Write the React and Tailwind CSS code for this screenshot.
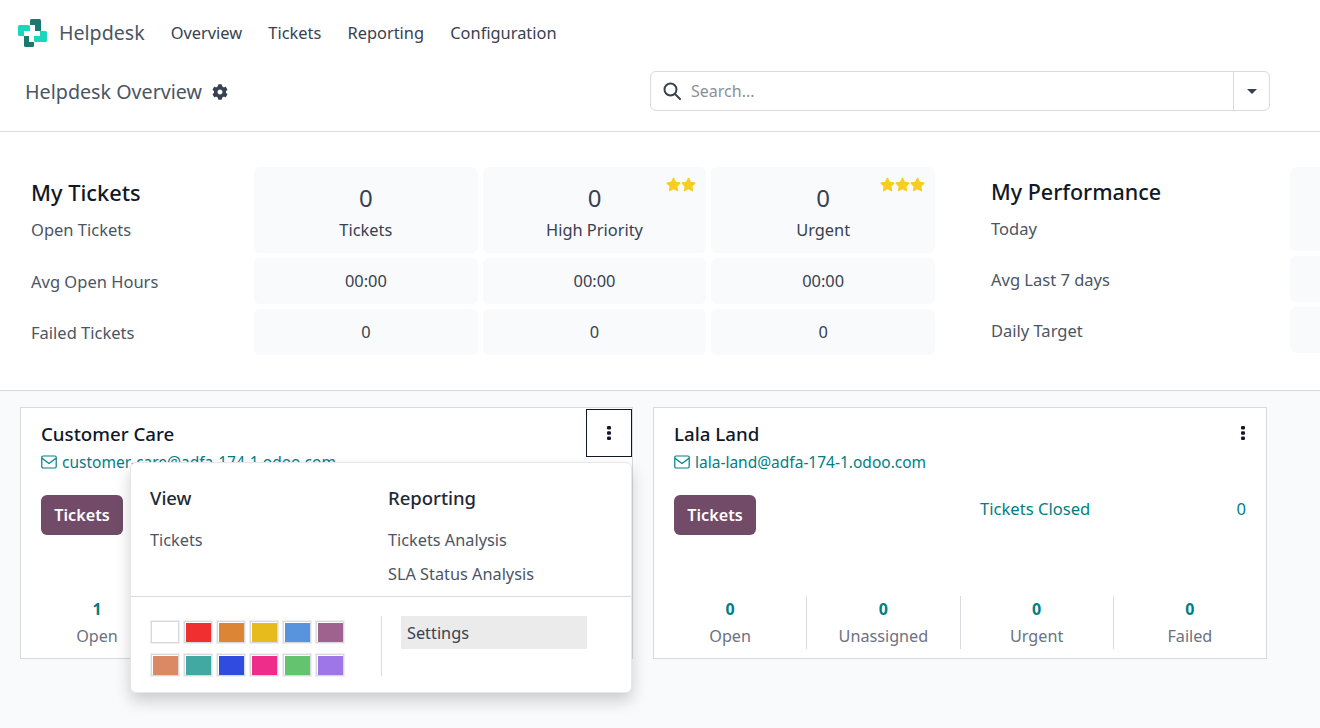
import { FaCog, FaStar } from "react-icons/fa";

const swatches = [
  "bg-white",
  "bg-[#f03030]",
  "bg-[#dc8534]",
  "bg-[#e8bb1d]",
  "bg-[#5794dd]",
  "bg-[#9f628f]",
  "bg-[#db8865]",
  "bg-[#41a9a2]",
  "bg-[#304be0]",
  "bg-[#ee2d8a]",
  "bg-[#63c36e]",
  "bg-[#9f76e8]",
];

function Logo() {
  return (
    <svg viewBox="0 0 29 28" className="h-[28px] w-[29px]">
      <rect x="6" y="15" width="10" height="13" rx="1.500" fill="#1a7a70" />
      <rect x="12" y="0" width="11" height="16" rx="1.500" fill="#1a7a70" />
      <rect x="0" y="6" width="12" height="11" rx="1.500" fill="#1ad6bd" />
      <rect x="16" y="12" width="13" height="11" rx="1.500" fill="#1ad6bd" />
      <path d="M12 6h5v6h5v5h-6v6h-5v-6H6v-5h6z" fill="#fff" />
    </svg>
  );
}

function Stars({ count }) {
  return (
    <div className="absolute right-[10px] top-[10px] flex">
      {Array.from({ length: count }, (_, index) => (
        <FaStar key={index} className="h-[15px] w-[15px] text-[#f7cd1f]" />
      ))}
    </div>
  );
}

function Mail() {
  return (
    <svg viewBox="0 0 16 14" className="h-[14px] w-[16px] shrink-0" fill="none" stroke="#017e84" strokeWidth="1.200">
      <rect x="0.800" y="1" width="14.400" height="12" rx="1.200" />
      <path d="M1 3.200l7 5.300 7-5.300" />
    </svg>
  );
}

function Kebab() {
  return (
    <svg viewBox="0 0 4 14" className="h-[14px] w-[4px]" fill="#111827">
      <rect x="0" y="0" width="4" height="3.400" rx="1.200" />
      <rect x="0" y="5.300" width="4" height="3.400" rx="1.200" />
      <rect x="0" y="10.600" width="4" height="3.400" rx="1.200" />
    </svg>
  );
}

function StatCell({ children, stars, className }) {
  return (
    <div className={`relative flex items-center justify-center rounded-[6px] bg-[#f9fafb] ${className}`}>
      {stars ? <Stars count={stars} /> : null}
      {children}
    </div>
  );
}

function BigCell({ value, label, stars }) {
  return (
    <StatCell stars={stars} className="h-[86px] flex-col pt-[2px]">
      <div className="text-[24px] leading-[36px] text-[#374151]">{value}</div>
      <div className="mt-[1px] text-[16.400px] leading-[26px] text-[#374151]">{label}</div>
    </StatCell>
  );
}

function SmallCell({ value }) {
  return (
    <StatCell className="h-[46px] text-[16.400px] text-[#374151]">{value}</StatCell>
  );
}

function CardStat({ value, label, divider }) {
  return (
    <div className={`flex h-[53px] flex-1 flex-col items-center justify-center ${divider ? "border-l border-[#d8dadd]" : ""}`}>
      <div className="text-[16px] font-bold leading-[26px] text-[#017e84]">{value}</div>
      <div className="pt-[1px] text-[16.200px] leading-[27px] text-[#6b7280]">{label}</div>
    </div>
  );
}

function Card({ title, email, menu, closed, open }) {
  return (
    <div className="relative flex h-[252px] flex-col border border-[#d8dadd] bg-white">
      <div className="flex items-start justify-between pl-[20px]">
        <div className="pt-[12px]">
          <div className="text-[18.700px] font-medium leading-[28px] text-[#111827]">{title}</div>
          <div className="flex items-center gap-[5px] text-[15.500px] leading-[28px] text-[#017e84]">
            <Mail />
            {email}
          </div>
        </div>
        {menu ? (
          <div className="mt-[1px] flex h-[48px] w-[46px] items-center justify-center border border-[#111827]">
            <Kebab />
          </div>
        ) : (
          <div className="mr-[21px] mt-[18px] flex">
            <Kebab />
          </div>
        )}
      </div>
      <div className="mt-[19px] flex items-start pl-[20px] pr-[20px]">
        <div className="flex h-[40px] w-[82px] items-center justify-center rounded-[6px] bg-[#714b67] pt-[1px] text-[16.200px] font-semibold text-white">
          Tickets
        </div>
        {closed ? (
          <div className="flex flex-1 justify-between pl-[224px] text-[16.600px] leading-[28px] text-[#017e84]">
            <span>Tickets Closed</span>
            <span>0</span>
          </div>
        ) : null}
      </div>
      <div className="mt-auto mb-[9px] flex">
        <CardStat value={open} label="Open" />
        <CardStat value="0" label="Unassigned" divider />
        <CardStat value="0" label="Urgent" divider />
        <CardStat value="0" label="Failed" divider />
      </div>
    </div>
  );
}

function CardMenu() {
  return (
    <div className="absolute left-[110px] top-[55px] z-10 w-[502px] rounded-[6px] border border-[#e5e7eb] bg-white shadow-[0_8px_16px_rgba(0,0,0,0.18)]">
      <div className="flex h-[134px] border-b border-[#d8dadd] pl-[19px] pt-[20px]">
        <div className="w-[238px]">
          <div className="text-[18.500px] font-medium leading-[30px] text-[#1f2937]">View</div>
          <div className="mt-[10px] text-[16.300px] leading-[34px] text-[#4b5563]">Tickets</div>
        </div>
        <div>
          <div className="text-[18.500px] font-medium leading-[30px] text-[#1f2937]">Reporting</div>
          <div className="mt-[10px] text-[16.300px] leading-[34px] text-[#4b5563]">Tickets Analysis</div>
          <div className="text-[16.300px] leading-[34px] text-[#4b5563]">SLA Status Analysis</div>
        </div>
      </div>
      <div className="flex h-[95px] pl-[20px] pt-[19px]">
        <div className="mt-[5px] grid h-[55px] w-[193px] grid-cols-6 gap-x-[5px] gap-y-[11px]">
          {swatches.map((color, index) => (
            <div key={index} className="h-[22px] w-[28px] border border-[#d8d9dc] bg-white p-[0.500px] outline outline-[#eeeff0]">
              <div className={`h-full w-full ${color}`} />
            </div>
          ))}
        </div>
        <div className="ml-[37px] h-[60px] border-l border-[#d8dadd]" />
        <div className="ml-[19px] h-[33px] w-[186px] bg-[#ebebeb] px-[6px] pt-[1px] text-[16.300px] leading-[33px] text-[#374151]">
          Settings
        </div>
      </div>
    </div>
  );
}

export default function App() {
  return (
    <div className="h-[728px] w-[1320px] overflow-hidden bg-[#f9fafb] font-['Noto_Sans','Open_Sans',sans-serif]">
      <div className="bg-white">
        <div className="flex h-[65px] items-center pl-[18px]">
          <Logo />
          <div className="ml-[12px] pt-[1px] text-[19.600px] text-[#4b5563]">Helpdesk</div>
          <div className="ml-[26px] flex gap-[26.200px] pt-[1px] text-[16.400px] text-[#374151]">
            <span>Overview</span>
            <span>Tickets</span>
            <span>Reporting</span>
            <span>Configuration</span>
          </div>
        </div>
        <div className="flex h-[67px] items-start border-b border-[#d8dadd] pl-[25px] pt-[6px]">
          <div className="flex h-[40px] w-[625px] items-center gap-[10px] pt-[1px]">
            <span className="text-[19.700px] text-[#4b5563]">Helpdesk Overview</span>
            <FaCog className="h-[16px] w-[16px] text-[#374151]" />
          </div>
          <div className="flex h-[40px] w-[620px] rounded-[6px] border border-[#d8dadd]">
            <div className="flex flex-1 items-center gap-[10px] pl-[12px]">
              <svg viewBox="0 0 18 18" className="h-[18px] w-[18px]" fill="none" stroke="#374151" strokeWidth="2">
                <circle cx="7.500" cy="7.500" r="6" />
                <path d="M12 12l5 5" strokeLinecap="round" />
              </svg>
              <span className="text-[16px] text-[#8b8f98]">Search...</span>
            </div>
            <div className="flex w-[36px] items-center justify-center border-l border-[#d8dadd]">
              <div className="h-0 w-0 border-x-[5.500px] border-t-[5.500px] border-x-transparent border-t-[#374151]" />
            </div>
          </div>
        </div>
        <div className="flex h-[259px] border-b border-[#d8dadd] pt-[35px]">
          <div className="w-[254px] shrink-0 pl-[31px]">
            <div className="flex h-[86px] flex-col pt-[11px]">
              <div className="text-[21.800px] font-medium leading-[30px] text-[#111827]">My Tickets</div>
              <div className="mt-[9px] text-[16.500px] leading-[26px] text-[#4b5563]">Open Tickets</div>
            </div>
            <div className="mt-[6px] flex h-[46px] items-center text-[16.500px] text-[#4b5563]">Avg Open Hours</div>
            <div className="mt-[5px] flex h-[46px] items-center text-[16.500px] text-[#4b5563]">Failed Tickets</div>
          </div>
          <div className="grid w-[681px] shrink-0 grid-cols-3 grid-rows-[86px_46px_46px] gap-x-[5px] gap-y-[5px] self-start">
            <BigCell value="0" label="Tickets" />
            <BigCell value="0" label="High Priority" stars={2} />
            <BigCell value="0" label="Urgent" stars={3} />
            <SmallCell value="00:00" />
            <SmallCell value="00:00" />
            <SmallCell value="00:00" />
            <SmallCell value="0" />
            <SmallCell value="0" />
            <SmallCell value="0" />
          </div>
          <div className="ml-[56px] w-[299px] shrink-0">
            <div className="flex h-[84px] flex-col pt-[10px]">
              <div className="text-[21.500px] font-medium leading-[30px] text-[#111827]">My Performance</div>
              <div className="mt-[9px] text-[16.500px] leading-[26px] text-[#4b5563]">Today</div>
            </div>
            <div className="mt-[6px] flex h-[46px] items-center text-[16.500px] text-[#4b5563]">Avg Last 7 days</div>
            <div className="mt-[5px] flex h-[46px] items-center text-[16.500px] text-[#4b5563]">Daily Target</div>
          </div>
          <div className="flex w-[30px] shrink-0 flex-col gap-[5px]">
            <div className="h-[84px] rounded-l-[6px] bg-[#f9fafb]" />
            <div className="h-[46px] rounded-l-[6px] bg-[#f9fafb]" />
            <div className="h-[46px] rounded-l-[6px] bg-[#f9fafb]" />
          </div>
        </div>
      </div>
      <div className="grid w-[1267px] grid-cols-[613px_614px] gap-x-[20px] pl-[20px] pt-[16px]">
        <div className="relative">
          <Card title="Customer Care" email="customer-care@adfa-174-1.odoo.com" menu open="1" />
          <CardMenu />
        </div>
        <Card title="Lala Land" email="lala-land@adfa-174-1.odoo.com" closed open="0" />
      </div>
    </div>
  );
}
